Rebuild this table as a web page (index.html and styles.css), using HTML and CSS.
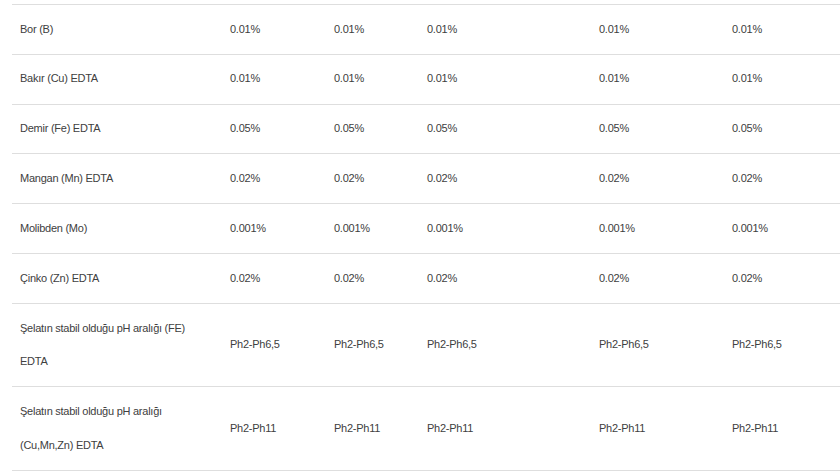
FILE: index.html
```html
<!DOCTYPE html>
<html lang="tr">
<head>
<meta charset="utf-8">
<link rel="stylesheet" href="styles.css">
</head>
<body>
<div class="wrap">
<table class="spec">
  <colgroup>
    <col class="c1"><col class="c2"><col class="c3"><col class="c4"><col class="c5"><col class="c6">
  </colgroup>
  <tbody>
    <tr><td>Bor (B)</td><td>0.01%</td><td>0.01%</td><td>0.01%</td><td>0.01%</td><td>0.01%</td></tr>
    <tr><td>Bakır (Cu) EDTA</td><td>0.01%</td><td>0.01%</td><td>0.01%</td><td>0.01%</td><td>0.01%</td></tr>
    <tr><td>Demir (Fe) EDTA</td><td>0.05%</td><td>0.05%</td><td>0.05%</td><td>0.05%</td><td>0.05%</td></tr>
    <tr><td>Mangan (Mn) EDTA</td><td>0.02%</td><td>0.02%</td><td>0.02%</td><td>0.02%</td><td>0.02%</td></tr>
    <tr><td>Molibden (Mo)</td><td>0.001%</td><td>0.001%</td><td>0.001%</td><td>0.001%</td><td>0.001%</td></tr>
    <tr><td>Çinko (Zn) EDTA</td><td>0.02%</td><td>0.02%</td><td>0.02%</td><td>0.02%</td><td>0.02%</td></tr>
    <tr><td>Şelatın stabil olduğu pH aralığı (FE) EDTA</td><td>Ph2-Ph6,5</td><td>Ph2-Ph6,5</td><td>Ph2-Ph6,5</td><td>Ph2-Ph6,5</td><td>Ph2-Ph6,5</td></tr>
    <tr><td>Şelatın stabil olduğu pH aralığı (Cu,Mn,Zn) EDTA</td><td>Ph2-Ph11</td><td>Ph2-Ph11</td><td>Ph2-Ph11</td><td>Ph2-Ph11</td><td>Ph2-Ph11</td></tr>
  </tbody>
</table>
</div>
</body>
</html>
```
FILE: styles.css
```css
html, body {
  margin: 0;
  padding: 0;
  background: #ffffff;
}
.wrap {
  padding: 4px 0 0 12px;
}
.spec {
  border-collapse: collapse;
  table-layout: fixed;
  width: 828px;
  font-family: "Liberation Sans", Arial, sans-serif;
  font-size: 11px;
  color: #404040;
}
.c1 { width: 210px; }
.c2 { width: 104px; }
.c3 { width: 93px; }
.c4 { width: 172px; }
.c5 { width: 133px; }
.c6 { width: 116px; }
.spec tr {
  border-top: 1px solid #dedede;
  border-bottom: 1px solid #dedede;
}
.spec td {
  padding: 7.58px 8px;
  line-height: 33.67px;
  vertical-align: middle;
  text-align: left;
  letter-spacing: -0.25px;
}
```
